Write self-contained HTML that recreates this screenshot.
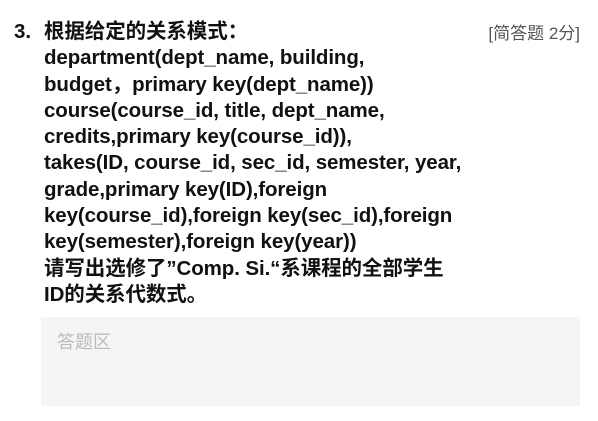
<!DOCTYPE html>
<html><head><meta charset="utf-8"><style>
body{margin:0;width:598px;height:421px;background:#fff;position:relative;font-family:"Liberation Sans","Noto Sans CJK SC",sans-serif;}
.num{position:absolute;left:14px;top:19px;font-size:20.5px;font-weight:bold;color:#111;line-height:26.3px}
.q{position:absolute;left:44px;top:19px;font-size:20.5px;font-weight:bold;color:#111;line-height:26.3px;white-space:nowrap;letter-spacing:-0.1px}
.tag{position:absolute;right:18px;top:19px;font-size:17px;color:#555;}
.box{position:absolute;left:41px;top:317px;width:539px;height:89px;background:#f5f5f5;}
.ph{position:absolute;left:16px;top:11px;font-size:18px;color:#bbb;}
</style></head><body>
<div class="num">3.</div>
<div class="q">根据给定的关系模式：<br>department(dept_name, building,<br>budget，primary key(dept_name))<br>course(course_id, title, dept_name,<br>credits,primary key(course_id)),<br>takes(ID, course_id, sec_id, semester, year,<br>grade,primary key(ID),foreign<br>key(course_id),foreign key(sec_id),foreign<br>key(semester),foreign key(year))<br>请写出选修了”Comp. Si.“系课程的全部学生<br>ID的关系代数式。</div>
<div class="tag">[简答题 2分]</div>
<div class="box"><div class="ph">答题区</div></div>
</body></html>
